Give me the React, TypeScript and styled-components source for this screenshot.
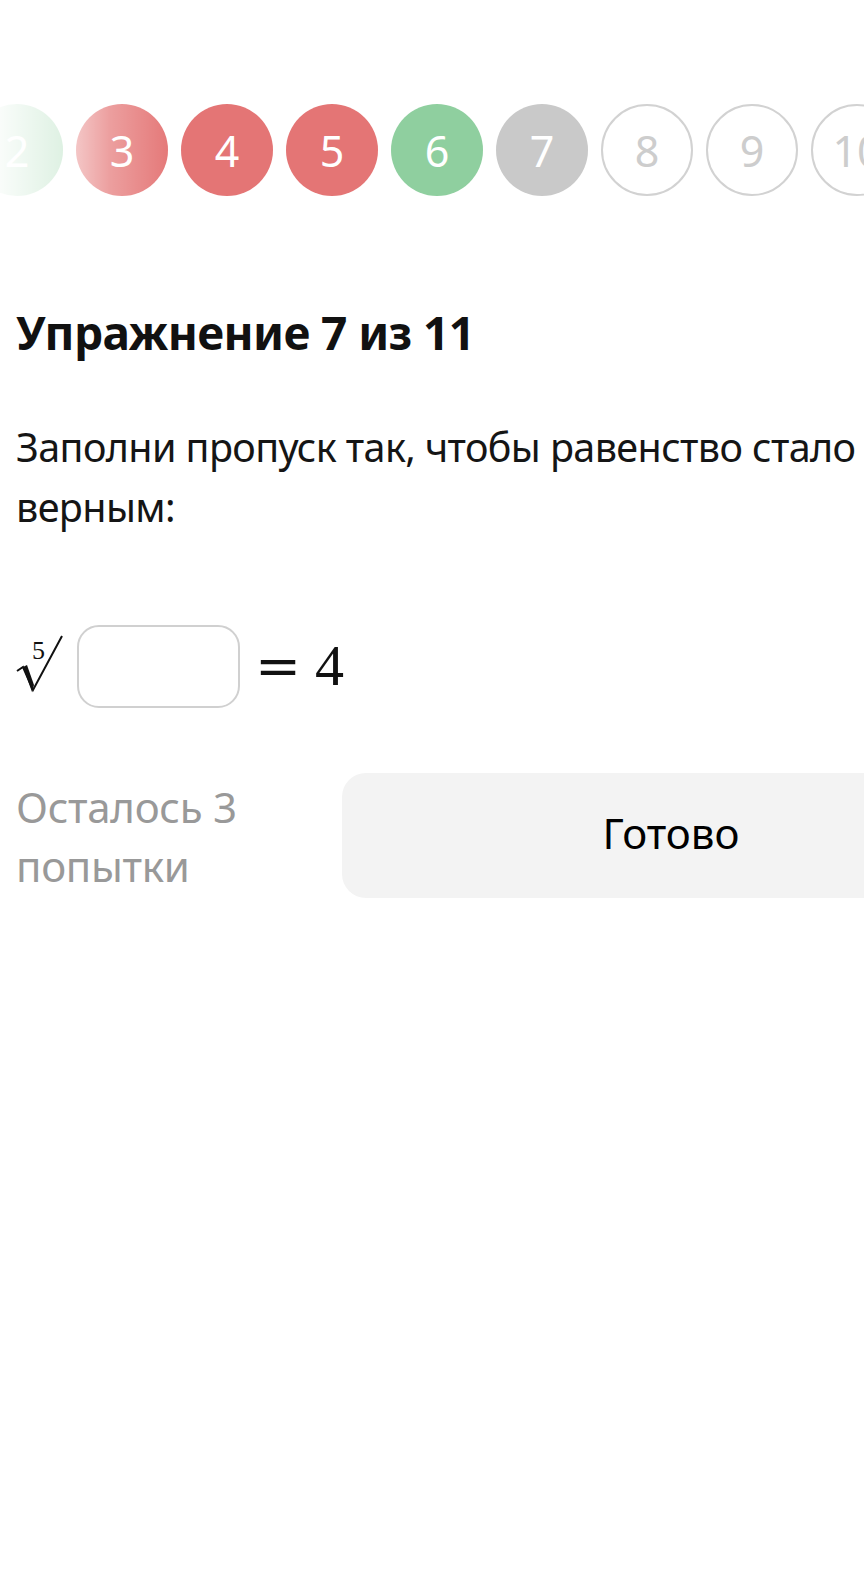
import React from "react";
import styled, { createGlobalStyle, css } from "styled-components";

const GlobalStyle = createGlobalStyle`
  html, body {
    margin: 0;
    padding: 0;
    background: #ffffff;
    overflow: hidden;
  }
  body {
    font-family: "Noto Sans", "Open Sans", sans-serif;
    color: #111111;
  }
`;

const Page = styled.div`
  width: 1016px;
  box-sizing: border-box;
  padding: 0 16px;
`;

const StripViewport = styled.div`
  position: relative;
  margin: 0 -16px;
  padding-top: 104px;
  height: 92px;
`;

const Track = styled.div`
  display: flex;
  gap: 13px;
  padding-left: 16px;
  transform: translateX(-150px);
`;

const Fade = styled.div`
  position: absolute;
  left: 0;
  top: 104px;
  width: 180px;
  height: 92px;
  background: linear-gradient(
    to right,
    rgba(255, 255, 255, 0.95) 0px,
    rgba(255, 255, 255, 0.72) 60px,
    rgba(255, 255, 255, 0.3) 110px,
    rgba(255, 255, 255, 0) 175px
  );
  pointer-events: none;
`;

type Status = "wrong" | "right" | "current" | "todo";

const Circle = styled.div<{ $status: Status }>`
  flex: 0 0 auto;
  width: 92px;
  height: 92px;
  box-sizing: border-box;
  border-radius: 50%;
  display: flex;
  align-items: center;
  justify-content: center;
  font-size: 43px;
  font-weight: 400;
  line-height: 1;
  ${({ $status }) =>
    $status === "wrong"
      ? css`
          background: #e47575;
          color: #ffffff;
        `
      : $status === "right"
      ? css`
          background: #8fcf9f;
          color: #ffffff;
        `
      : $status === "current"
      ? css`
          background: #c9c9c9;
          color: #ffffff;
        `
      : css`
          background: #ffffff;
          border: 2px solid #d2d2d2;
          color: #cdcdcd;
        `}
`;

const Title = styled.h1`
  margin: 108px 0 0;
  font-size: 46px;
  line-height: 57.6px;
  font-weight: 700;
  letter-spacing: -0.6px;
  color: #111111;
`;

const Prompt = styled.p`
  margin: 55px 0 0;
  font-size: 39.5px;
  line-height: 60px;
  letter-spacing: -0.6px;
  font-weight: 400;
  color: #151515;
`;

const MathRow = styled.div`
  margin-top: 88px;
  display: flex;
  align-items: center;
  height: 83px;
`;

const Radical = styled.div`
  position: relative;
  width: 50px;
  height: 60px;
  margin-right: 11px;
  align-self: flex-start;
  margin-top: 10px;
`;

const RootIndex = styled.span`
  position: absolute;
  left: 16px;
  top: 3px;
  font-family: "Liberation Serif", "DejaVu Serif", serif;
  font-size: 26px;
  line-height: 26px;
  color: #111111;
`;

const Blank = styled.input`
  width: 163px;
  height: 83px;
  box-sizing: border-box;
  border: 2px solid #d0d0d0;
  border-radius: 22px;
  background: #ffffff;
  outline: none;
  padding: 0 16px;
  font-size: 40px;
`;

const Equals = styled.span`
  margin-left: 15px;
  font-family: "DejaVu Serif", serif;
  font-size: 55px;
  line-height: 1;
  color: #111111;
`;

const Value = styled.span`
  margin-left: 14px;
  font-family: "Liberation Serif", serif;
  font-size: 58px;
  line-height: 1;
  color: #111111;
`;

const Footer = styled.div`
  margin-top: 65px;
  display: grid;
  grid-template-columns: 310px 1fr;
  column-gap: 16px;
  align-items: start;
`;

const Attempts = styled.div`
  padding-top: 4px;
  font-size: 42px;
  line-height: 59px;
  letter-spacing: -0.3px;
  color: #999999;
`;

const DoneButton = styled.button`
  height: 125px;
  border: none;
  border-radius: 24px;
  background: #f3f3f3;
  font-family: "Noto Sans", "Open Sans", sans-serif;
  font-size: 42px;
  color: #000000;
  cursor: pointer;
  padding-bottom: 6px;
`;

const circles: { n: number; s: Status }[] = [
  { n: 1, s: "right" },
  { n: 2, s: "right" },
  { n: 3, s: "wrong" },
  { n: 4, s: "wrong" },
  { n: 5, s: "wrong" },
  { n: 6, s: "right" },
  { n: 7, s: "current" },
  { n: 8, s: "todo" },
  { n: 9, s: "todo" },
  { n: 10, s: "todo" },
  { n: 11, s: "todo" },
];

export default function App() {
  return (
    <>
      <GlobalStyle />
      <Page>
        <StripViewport>
          <Track>
            {circles.map((c) => (
              <Circle key={c.n} $status={c.s}>
                {c.n}
              </Circle>
            ))}
          </Track>
          <Fade />
        </StripViewport>
        <Title>Упражнение 7 из 11</Title>
        <Prompt>Заполни пропуск так, чтобы равенство стало верным:</Prompt>
        <MathRow>
          <Radical>
            <svg width="50" height="60" viewBox="0 0 50 60">
              <path
                d="M1 36 L7 32 L17 55 L46 1"
                fill="none"
                stroke="#111"
                strokeWidth="2"
                strokeLinejoin="miter"
              />
              <path d="M7 32 L11 30 L18 50 L16 57 Z" fill="#111" />
            </svg>
            <RootIndex>5</RootIndex>
          </Radical>
          <Blank aria-label="ответ" />
          <Equals>=</Equals>
          <Value>4</Value>
        </MathRow>
        <Footer>
          <Attempts>Осталось 3 попытки</Attempts>
          <DoneButton>Готово</DoneButton>
        </Footer>
      </Page>
    </>
  );
}
